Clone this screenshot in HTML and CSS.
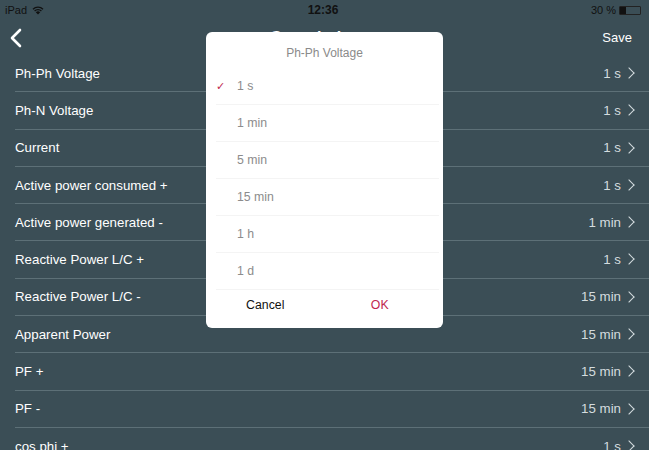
FILE: index.html
```html
<!DOCTYPE html>
<html lang="en">
<head>
    <meta charset="UTF-8">
    <title>Granularity</title>
    <meta name="viewport" content="width=device-width, initial-scale=1.0">
    <link rel="stylesheet" href="styles.css">
</head>
<body>
    <div class="status">
        <div class="status-left">
            <span>iPad</span>
            <svg class="wifi" width="12" height="9" viewBox="0 0 12 9">
                <path d="M6 8.5 L3.8 6.2 A3.2 3.2 0 0 1 8.2 6.2 Z" fill="#111"/>
                <path d="M2.6 5 A4.8 4.8 0 0 1 9.4 5" stroke="#111" stroke-width="1.3" fill="none"/>
                <path d="M1 3.2 A7 7 0 0 1 11 3.2" stroke="#111" stroke-width="1.3" fill="none"/>
            </svg>
        </div>
        <div class="status-time">12:36</div>
        <div class="status-right">
            <span>30 %</span>
            <span class="battery"><span class="battery-level"></span></span>
        </div>
    </div>

    <div class="nav">
        <svg class="back" width="14" height="20" viewBox="0 0 14 20">
            <path d="M11 2 L3 10 L11 18" stroke="#fff" stroke-width="2.6" fill="none" stroke-linecap="round" stroke-linejoin="round"/>
        </svg>
        <div class="nav-title">Granularity</div>
        <div class="nav-save">Save</div>
    </div>

    <div class="list">
        <div class="row"><span class="label">Ph-Ph Voltage</span><span class="value">1 s</span></div>
        <div class="row"><span class="label">Ph-N Voltage</span><span class="value">1 s</span></div>
        <div class="row"><span class="label">Current</span><span class="value">1 s</span></div>
        <div class="row"><span class="label">Active power consumed +</span><span class="value">1 s</span></div>
        <div class="row"><span class="label">Active power generated -</span><span class="value">1 min</span></div>
        <div class="row"><span class="label">Reactive Power L/C +</span><span class="value">1 s</span></div>
        <div class="row"><span class="label">Reactive Power L/C -</span><span class="value">15 min</span></div>
        <div class="row"><span class="label">Apparent Power</span><span class="value">15 min</span></div>
        <div class="row"><span class="label">PF +</span><span class="value">15 min</span></div>
        <div class="row"><span class="label">PF -</span><span class="value">15 min</span></div>
        <div class="row"><span class="label">cos phi +</span><span class="value">1 s</span></div>
    </div>

    <div class="dialog">
        <div class="dialog-title">Ph-Ph Voltage</div>
        <div class="option selected"><span class="check">✓</span>1 s</div>
        <div class="option"><span class="check"></span>1 min</div>
        <div class="option"><span class="check"></span>5 min</div>
        <div class="option"><span class="check"></span>15 min</div>
        <div class="option"><span class="check"></span>1 h</div>
        <div class="option"><span class="check"></span>1 d</div>
        <div class="buttons">
            <span class="btn">Cancel</span>
            <span class="btn ok">OK</span>
        </div>
    </div>
</body>
</html>
```

FILE: styles.css
```css
body {
    margin: 0;
    width: 649px;
    height: 450px;
    overflow: hidden;
    background-color: #3b4e56;
    font-family: "Liberation Sans", Arial, sans-serif;
    color: #fff;
    position: relative;
}
.status {
    height: 20px;
    display: flex;
    align-items: center;
    justify-content: space-between;
    padding: 0 8px 0 5px;
    font-size: 11px;
    color: #111;
}
.status-left, .status-right {
    display: flex;
    align-items: center;
    gap: 5px;
    width: 120px;
}
.status-right {
    justify-content: flex-end;
    gap: 3px;
}
.status-time {
    font-weight: bold;
    font-size: 12px;
}
.battery {
    width: 20px;
    height: 7px;
    border: 1px solid #222;
    border-radius: 1px;
}
.battery-level {
    display: block;
    width: 6px;
    height: 7px;
    background: #111;
}
.nav {
    height: 35px;
    display: flex;
    align-items: center;
    justify-content: space-between;
    padding: 0 17px 0 9px;
}
.nav-title {
    font-size: 16px;
    font-weight: bold;
}
.nav-save {
    font-size: 13px;
}
.row {
    height: 36.3px;
    display: flex;
    align-items: center;
    justify-content: space-between;
    margin-left: 15px;
    padding-right: 28px;
    border-bottom: 1px solid #5d7077;
    font-size: 13.3px;
    position: relative;
}
.value {
    color: #d4dcdf;
}
.row::after {
    content: "";
    position: absolute;
    right: 16px;
    top: 14px;
    width: 7px;
    height: 7px;
    border-top: 1.6px solid #d4dcdf;
    border-right: 1.6px solid #d4dcdf;
    transform: rotate(45deg);
}
.dialog {
    position: absolute;
    left: 206px;
    top: 32px;
    width: 237px;
    height: 296px;
    background: #fff;
    border-radius: 6px;
}
.dialog-title {
    height: 36px;
    line-height: 42px;
    text-align: center;
    color: #8a8a8a;
    font-size: 12px;
}
.option {
    height: 36px;
    display: flex;
    align-items: center;
    margin-left: 10px;
    margin-right: 4px;
    border-bottom: 1px solid #f4f4f4;
    color: #8c8c8c;
    font-size: 12.3px;
}
.check {
    width: 21px;
    color: #c0284f;
    font-size: 11px;
}
.buttons {
    display: flex;
    height: 30px;
    align-items: center;
    font-size: 12.3px;
}
.btn {
    flex: 1;
    text-align: center;
    color: #111;
    padding-left: 4px;
}
.btn.ok {
    color: #c0284f;
    padding-right: 8px;
}
```
